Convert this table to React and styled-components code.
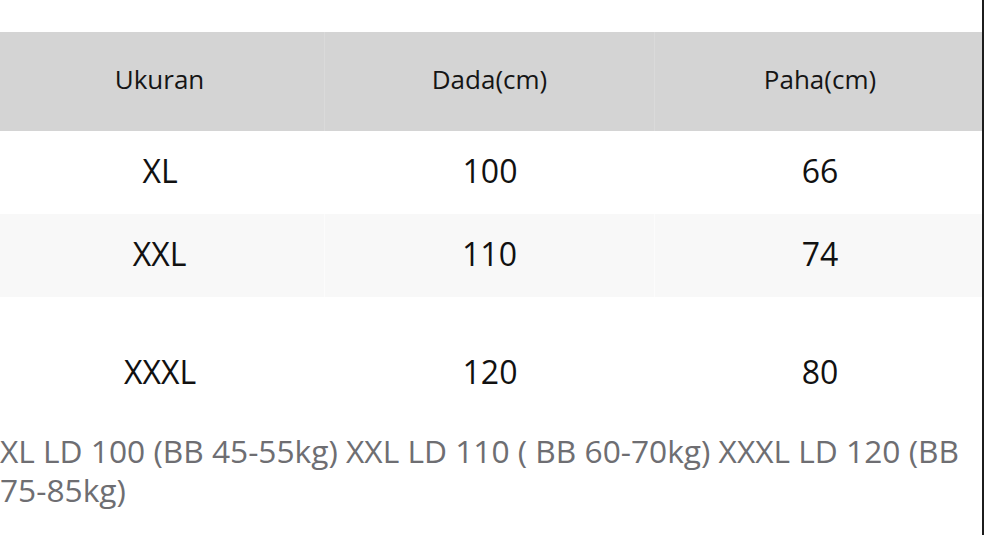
import React from 'react';
import styled, { createGlobalStyle } from 'styled-components';

const GlobalStyle = createGlobalStyle`
  html, body {
    margin: 0;
    padding: 0;
    background: #ffffff;
    font-family: "Open Sans", "Noto Sans", sans-serif;
    overflow: hidden;
  }
`;

const sizes = [
  { size: 'XL', chest: '100', thigh: '66' },
  { size: 'XXL', chest: '110', thigh: '74', shaded: true },
  { size: 'XXXL', chest: '120', thigh: '80', tall: true },
];

class App extends React.Component {
  render() {
    return (
      <Page>
        <GlobalStyle />
        <Table>
          <HeadRow>
            <HeadCell>Ukuran</HeadCell>
            <HeadCell>Dada(cm)</HeadCell>
            <HeadCell last>Paha(cm)</HeadCell>
          </HeadRow>
          {sizes.map((row) => (
            <Row key={row.size} shaded={row.shaded} tall={row.tall}>
              <Cell shaded={row.shaded}>{row.size}</Cell>
              <Cell shaded={row.shaded}>{row.chest}</Cell>
              <Cell last>{row.thigh}</Cell>
            </Row>
          ))}
        </Table>
        <Note>
          XL LD 100 (BB 45-55kg) XXL LD 110 ( BB 60-70kg) XXXL LD 120 (BB 75-85kg)
        </Note>
      </Page>
    );
  }
}

const Page = styled.div`
  width: 984px;
  height: 535px;
  border-right: 2px solid #1c1c1c;
  padding-top: 32px;
  box-sizing: border-box;
  overflow: hidden;
`;

const Table = styled.div`
  margin-left: -5px;
  width: 990px;
`;

const HeadRow = styled.div`
  display: grid;
  grid-template-columns: 330px 330px 330px;
  height: 99px;
  background: #d4d4d4;
`;

const HeadCell = styled.div`
  display: flex;
  align-items: center;
  justify-content: center;
  padding-bottom: 5px;
  font-size: 26px;
  color: #151515;
  border-right: ${(p) => (p.last ? 'none' : '1px solid #dadada')};
`;

const Row = styled.div`
  display: grid;
  grid-template-columns: 330px 330px 330px;
  height: ${(p) => (p.tall ? '117px' : '83px')};
  padding-top: ${(p) => (p.tall ? '36px' : '0')};
  box-sizing: border-box;
  background: ${(p) => (p.shaded ? '#f8f8f8' : '#ffffff')};
`;

const Cell = styled.div`
  display: flex;
  align-items: center;
  justify-content: center;
  padding-bottom: 4px;
  font-size: 32px;
  line-height: 1;
  color: #111111;
  border-right: ${(p) => (p.shaded && !p.last ? '1px solid #fcfcfc' : 'none')};
`;

const Note = styled.p`
  margin: 0;
  padding-top: 17px;
  font-size: 31.7px;
  line-height: 39px;
  color: #6e6e72;
`;

export default App;
